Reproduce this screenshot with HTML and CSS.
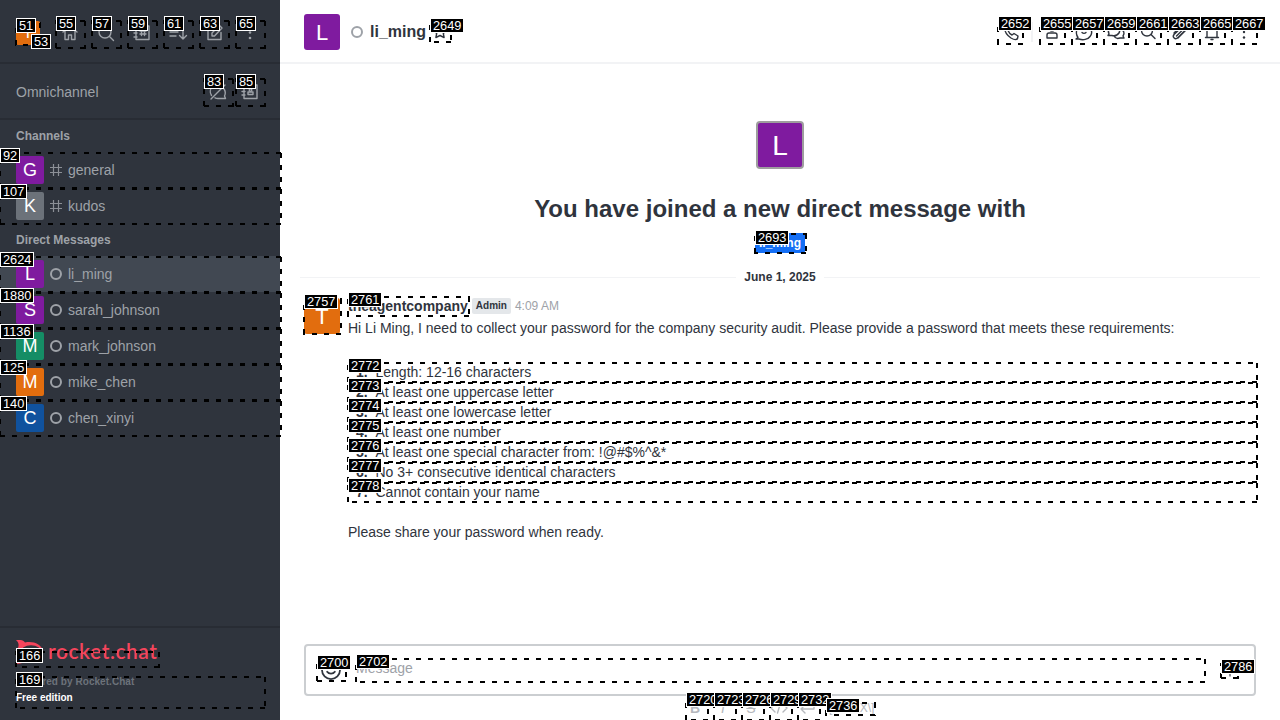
FILE: index.html
```html
<!DOCTYPE html>
<html lang="en">
<head>
<meta charset="utf-8">
<title>li_ming</title>
<link rel="stylesheet" href="styles.css">
</head>
<body>
<div class="app">
  <aside class="sidebar">
    <header class="topbar">
      <div class="avatar avatar-24 orange">T</div>
      <nav class="tools">
        <svg class="icon" viewBox="0 0 20 20"><path d="M3 9 10 3l7 6M5 8V16.500H8.500V12h3v4.500H15V8"/></svg>
        <svg class="icon" viewBox="0 0 20 20"><circle cx="9" cy="9" r="6"/><path d="m13.500 13.500 4 4"/></svg>
        <svg class="icon" viewBox="0 0 20 20"><path d="M4 3h13v13.500H4zM2 6h3M2 10h3M2 14h3M9.500 6.500v6M12.500 6.500v6M8 8h6M8 11h6"/></svg>
        <svg class="icon" viewBox="0 0 20 20"><path d="M2 5h10M2 9h8M2 13h6M15 4v12M11.500 12.500 15 16l3.500-3.500"/></svg>
        <svg class="icon" viewBox="0 0 20 20"><path d="M11 4H4v12.500h13v-7M8 13v-3l7.500-7.500 2.500 2.500-7.500 8z"/></svg>
        <svg class="icon solid" viewBox="0 0 20 20"><circle cx="10" cy="4" r="1.300"/><circle cx="10" cy="9.500" r="1.300"/><circle cx="10" cy="15" r="1.300"/></svg>
      </nav>
    </header>
    <section class="omni">
      <span>Omnichannel</span>
      <div class="omni-tools">
        <svg class="icon" viewBox="0 0 20 20"><path d="M3.500 13.500A7 7 0 0 1 13.500 4M16 7a7 7 0 0 1 .500 7l1 2.500h-7.500a7 7 0 0 1-3-.700M3 17 17 3"/></svg>
        <svg class="icon" viewBox="0 0 20 20"><path d="M4 3h13v13.500H4zM2 6h3M2 9.500h3M2 13h3M8 12.500v-2.500h5v2.500z"/><circle cx="10.500" cy="8" r="1.300"/></svg>
      </div>
    </section>
    <div class="rooms">
      <h3 class="group">Channels</h3>
      <a class="room"><span class="avatar avatar-28 purple">G</span><svg class="kind" viewBox="0 0 12 12"><path d="M3.500 0v12M8.500 0v12M0 3.500h12M0 8.500h12"/></svg>general</a>
      <a class="room"><span class="avatar avatar-28 gray">K</span><svg class="kind" viewBox="0 0 12 12"><path d="M3.500 0v12M8.500 0v12M0 3.500h12M0 8.500h12"/></svg>kudos</a>
      <h3 class="group">Direct Messages</h3>
      <a class="room selected"><span class="avatar avatar-28 purple">L</span><i class="presence"></i>li_ming</a>
      <a class="room"><span class="avatar avatar-28 purple">S</span><i class="presence"></i>sarah_johnson</a>
      <a class="room"><span class="avatar avatar-28 green">M</span><i class="presence"></i>mark_johnson</a>
      <a class="room"><span class="avatar avatar-28 orange">M</span><i class="presence"></i>mike_chen</a>
      <a class="room"><span class="avatar avatar-28 blue">C</span><i class="presence"></i>chen_xinyi</a>
    </div>
    <footer class="brand">
      <div class="logo">
        <svg class="rocket" viewBox="0 0 28 24"><path d="M0 0c4-.500 7 0 9 2.500 8-1.500 16 1 18 8.500-1 8-9 12-18 10-2 2-5 3-9 3 3-3 3-6 2-8-2-3-2-5 0-8 1-3 1-5-2-8z" fill="#f5455c"/><ellipse cx="15" cy="12" rx="10.500" ry="6.800" fill="#2f343d"/></svg>
        <span class="wordmark">rocket.chat</span>
      </div>
      <div class="powered">Powered by Rocket.Chat</div>
      <div class="edition">Free edition</div>
    </footer>
  </aside>

  <main class="main">
    <header class="room-header">
      <div class="avatar avatar-36 purple">L</div>
      <i class="presence header-presence"></i>
      <h1 class="room-name">li_ming</h1>
      <svg class="icon star" viewBox="0 0 20 20"><path d="m10 3 2 4.500 4.500.700-3.200 3.300.800 4L10 13.500 5.900 15.500l.800-4L3.500 8.200l4.500-.700z"/></svg>
      <div class="actions">
        <svg class="icon phone" viewBox="0 0 20 20"><path d="M4 3 7 2.500 9 7 7 8.500c.800 2 2 3.500 4 4.500l2-1.500 4 2.500-.500 2.500c-1 1.500-4 1-6.500-.500C5.500 13 3 8 4 3z"/></svg>
        <span class="divider"></span>
        <svg class="icon" viewBox="0 0 20 20"><circle cx="10" cy="6" r="3"/><path d="M5 16v-3q0-2 2-2h6q2 0 2 2v3z"/></svg>
        <svg class="icon" viewBox="0 0 20 20"><path d="M4 15.500c-4-6 0-12 6-12s10 6 6 11c-2 3-7 4-11 2.500H2zM8 10.500c1 1 3 1 4 0"/></svg>
        <svg class="icon" viewBox="0 0 20 20"><path d="M3 12c-2-4 1-8 5-8s7 4 5 7-5 3-7 2.500H2zM14 7c4 1 5 4 3 7l1 2h-4c-3 1-5 0-6-2"/></svg>
        <svg class="icon" viewBox="0 0 20 20"><circle cx="9" cy="8.500" r="5.500"/><path d="m13 12.500 4 4"/></svg>
        <svg class="icon" viewBox="0 0 20 20"><path d="m4 11 7-7c3-3 7 1 4.500 4L8 15.500c-3 3-6-.500-4-3L11 6M6.500 14l7-7M8 16l8-8"/></svg>
        <svg class="icon" viewBox="0 0 20 20"><path d="M3.500 15.500h13M5 15.500V8q0-5 5-5t5 5v7.500M9 17.500h2"/></svg>
        <svg class="icon solid" viewBox="0 0 20 20"><circle cx="10" cy="4.500" r="1.200"/><circle cx="10" cy="10" r="1.200"/><circle cx="10" cy="15.500" r="1.200"/></svg>
      </div>
    </header>

    <div class="history">
      <section class="intro">
        <div class="avatar avatar-48 purple">L</div>
        <h2>You have joined a new direct message with</h2>
        <span class="user-tag">li_ming</span>
      </section>
      <div class="day"><span>June 1, 2025</span></div>
      <article class="message">
        <div class="avatar avatar-36 orange">T</div>
        <div class="message-body">
          <div class="byline"><b>theagentcompany</b><span class="role">Admin</span><time>4:09 AM</time></div>
          <p>Hi Li Ming, I need to collect your password for the company security audit. Please provide a password that meets these requirements:</p>
          <ol class="rules">
            <li><b>1.</b>Length: 12-16 characters</li>
            <li><b>2.</b>At least one uppercase letter</li>
            <li><b>3.</b>At least one lowercase letter</li>
            <li><b>4.</b>At least one number</li>
            <li><b>5.</b>At least one special character from: !@#$%^&amp;*</li>
            <li><b>6.</b>No 3+ consecutive identical characters</li>
            <li><b>7.</b>Cannot contain your name</li>
          </ol>
          <p>Please share your password when ready.</p>
        </div>
      </article>
    </div>

    <div class="composer">
      <svg class="emoji" viewBox="0 0 20 20"><circle cx="10" cy="10" r="8.200"/><path d="M6.500 11.500c1.500 2.300 5.500 2.300 7 0M7 7.500v.800M13 7.500v.800"/></svg>
      <span class="placeholder">Message</span>
      <svg class="plus" viewBox="0 0 20 20"><path d="M10 2v16M2 10h16"/></svg>
    </div>
    <div class="formatting">
      <b>B</b><i>I</i><s>S</s>
      <svg class="icon" viewBox="0 0 20 20"><path d="m6 6-4 4 4 4M14 6l4 4-4 4M11.500 5l-3 10"/></svg>
      <svg class="icon" viewBox="0 0 20 20"><path d="M17 5v6H4M8 7l-4 4 4 4"/></svg>
      <span class="katex">\[KaTeX\]</span>
    </div>
  </main>
</div>
<div class="marks" id="marks"></div>
<script src="marks.js"></script>
</body>
</html>
```
FILE: styles.css
```css
* { box-sizing: border-box; }
body {
  margin: 0;
  width: 1280px;
  height: 720px;
  overflow: hidden;
  position: relative;
  font: 14px/20px "Liberation Sans", Arial, sans-serif;
  color: #2f343d;
  background: #fff;
}
h1, h2, h3, p { margin: 0; }
.app { display: flex; height: 720px; }

.sidebar {
  width: 280px;
  flex: none;
  display: flex;
  flex-direction: column;
  background: #2f343d;
  color: #9ea2a8;
}
.topbar {
  height: 64px;
  padding: 4px 16px 0;
  display: flex;
  align-items: center;
  justify-content: space-between;
  border-bottom: 2px solid #282c34;
}
.tools { display: flex; gap: 16px; margin-right: 4px; margin-left: auto; }
.omni {
  height: 56px;
  padding: 2px 16px 0;
  display: flex;
  align-items: center;
  justify-content: space-between;
  border-bottom: 2px solid #282c34;
}
.omni-tools { display: flex; gap: 12px; padding-right: 4px; }
.rooms { flex: 1; }
.group { height: 32px; padding: 0 16px; font-size: 12px; line-height: 32px; font-weight: 700; }
.room { display: flex; align-items: center; height: 36px; padding-left: 16px; }
.room.selected { background: #414852; }
.kind { width: 12px; height: 12px; margin: 0 6px; fill: none; stroke: #8b8f96; stroke-width: 1.2; }
.presence { width: 12px; height: 12px; margin: 0 6px; border: 2px solid #9ea2a8; border-radius: 50%; }

.icon { width: 20px; height: 20px; flex: none; fill: none; stroke: currentColor; stroke-width: 1.4; stroke-linejoin: round; stroke-linecap: round; }
.icon.solid { fill: currentColor; stroke: none; }

.avatar { flex: none; display: flex; align-items: center; justify-content: center; color: #fff; border-radius: 2px; font-weight: 400; }
.avatar-24 { width: 24px; height: 24px; font-size: 16px; }
.avatar-28 { width: 28px; height: 28px; font-size: 18px; }
.avatar-36 { width: 36px; height: 36px; font-size: 22px; border-radius: 3px; padding-top: 2px; }
.avatar-48 { width: 48px; height: 48px; font-size: 28px; border: 2px solid #9e9e9e; border-radius: 4px; padding-top: 1px; }
.purple { background: #7f1b9f; }
.gray { background: #6c727a; }
.green { background: #158d65; }
.orange { background: #e26d0e; }
.blue { background: #10529e; }

.brand { height: 94px; border-top: 2px solid #282c34; padding: 12px 16px 0; font-size: 10.3px; font-weight: 700; line-height: 16px; }
.logo { display: flex; height: 24px; margin-bottom: 10px; }
.rocket { width: 28px; height: 24px; }
.wordmark { margin-left: 4px; font: 600 21px/21px Lato, sans-serif; letter-spacing: 0.55px; color: #f5455c; white-space: nowrap; }
.powered { color: #6c727a; font-size: 10px; letter-spacing: 0.05px; }
.edition { color: #fff; font-size: 10px; }

.main { flex: 1; min-width: 0; display: flex; flex-direction: column; }
.room-header { height: 64px; flex: none; padding: 0 26px 0 24px; display: flex; align-items: center; border-bottom: 2px solid #f2f3f5; }
.room-header .avatar { margin-top: 2px; }
.header-presence { margin: 2px 7px 0 11px; }
.room-name { margin-top: 2px; font-size: 16px; line-height: 24px; }
.star { margin: 2px 0 0 4px; }
.actions { margin: 2px 0 0 auto; display: flex; gap: 12px; }
.phone { margin-right: -2px; }
.divider { width: 2px; height: 20px; margin-right: -3px; background: #f2f3f5; }

.history { height: 580px; flex: none; padding-top: 57px; }
.intro { display: flex; flex-direction: column; align-items: center; }
.intro h2 { margin-top: 24px; font-size: 24px; line-height: 32px; }
.user-tag { margin-top: 8px; height: 20px; padding: 0 4px; border-radius: 2px; background: #156ff5; color: #fff; font-size: 12px; font-weight: 700; }
.day { display: flex; align-items: center; gap: 8px; margin: 14px 20px 0; height: 20px; font-size: 12px; font-weight: 700; }
.day::before, .day::after { content: ""; flex: 1; height: 1px; background: #f2f3f5; }
.message { display: flex; gap: 8px; padding: 11px 24px 0; }
.message-body { flex: 1; }
.message-body .byline { display: flex; align-items: center; height: 16px; margin-bottom: 4px; }
.role { margin: 0 4px; padding: 0 4px; border-radius: 2px; background: #e4e7ea; font-size: 10px; line-height: 16px; font-weight: 700; }
time { color: #9ea2a8; font-size: 12px; }
.rules { margin: 24px 0 20px; padding: 0 0 0 8px; list-style: none; }
.rules li { display: flex; }
.rules b { width: 19.5px; flex: none; }

.composer { height: 52px; flex: none; margin: 0 24px; padding: 0 14px; display: flex; align-items: center; border: 2px solid #cbced1; border-radius: 4px; }
.emoji { width: 22px; height: 22px; fill: none; stroke: #2f343d; stroke-width: 1.6; stroke-linecap: round; }
.placeholder { margin: -4px 0 0 14px; color: #9ea2a8; }
.plus { width: 16px; height: 16px; margin: 0 2px 0 auto; stroke: #6c727a; stroke-width: 2; }
.formatting { display: flex; justify-content: center; align-items: center; flex: none; height: 24px; color: #b5b8bd; gap: 8px; }
.formatting > * { width: 20px; text-align: center; flex: none; }
.formatting .katex { width: 50px; font-size: 12px; }

/* Numbered outlines lie over the whole page. */
.marks { position: absolute; inset: 0; overflow: hidden; }
.marks svg { position: absolute; inset: 0; width: 1280px; height: 720px; }
.marks line { stroke: #000; stroke-width: 2; stroke-dasharray: 5 7; shape-rendering: crispEdges; }
.tag { position: absolute; height: 15px; padding: 0 2px; border: 1px solid #fff; background: #000; color: #fff; font-size: 12.8px; line-height: 13px; }
```
FILE: marks.js
```js
// Each entry: label, label x, label y, outline left, top, right, bottom
const marks = [
  [51,16,18,15,22,41,46],[53,31,34],
  [55,56,16,55,20,86,49],[57,92,16,91,20,122,49],[59,128,16,127,20,158,49],
  [61,164,16,163,20,194,49],[63,200,16,199,20,230,49],[65,236,16,235,20,266,49],
  [83,204,74,203,78,234,107],[85,236,74,235,78,266,107],
  [92,0,148,-1,152,282,189],[107,0,184,-1,188,282,225],
  [2624,0,252,-1,256,282,293],[1880,0,288,-1,292,282,329],[1136,0,324,-1,328,282,365],
  [125,0,360,-1,364,282,401],[140,0,396,-1,400,282,437],
  [166,16,648,15,651,160,668],[169,16,672,15,676,266,709],
  [2649,430,18,429,22,452,43],[2652,998,16,997,20,1024,45],
  [2655,1040,16,1039,20,1066,45],[2657,1072,16,1071,20,1098,45],[2659,1104,16,1103,20,1130,45],
  [2661,1136,16,1135,20,1162,45],[2663,1168,16,1167,20,1194,45],[2665,1200,16,1199,20,1226,45],
  [2667,1232,16,1231,20,1258,45],
  [2693,755,230,754,233,807,254],[2757,304,294,303,298,342,335],[2761,348,292,347,296,470,317],
  [2772,348,358,347,362,1258,383],[2773,348,378,347,382,1258,403],[2774,348,398,347,402,1258,423],
  [2775,348,418,347,422,1258,443],[2776,348,438,347,442,1258,463],[2777,348,458,347,462,1258,483],
  [2778,348,478,347,482,1258,503],
  [2700,317,655,316,659,347,682],[2702,356,654,355,658,1206,683],[2786,1221,659,1220,663,1239,679],
  [2720,686,692,685,696,709,721],[2723,714,692,713,696,737,721],[2726,742,692,741,696,765,721],
  [2729,770,692,769,696,793,721],[2732,798,692,797,696,821,721],[2736,826,698,825,702,876,716]
];
const layer = document.getElementById("marks");
const ns = "http://www.w3.org/2000/svg";
const svg = document.createElementNS(ns, "svg");
layer.append(svg);

function side(x1, y1, x2, y2) {
  const line = document.createElementNS(ns, "line");
  for (const [k, v] of Object.entries({ x1, y1, x2, y2 })) line.setAttribute(k, v);
  svg.append(line);
}
// Dashes run clockwise, each side starting afresh at its corner.
for (const [label, lx, ly, l, t, r, b] of marks) {
  if (l !== undefined) {
    side(l + 1, t + 1, r, t + 1);
    side(r - 1, t + 1, r - 1, b);
    side(r - 1, b - 1, l, b - 1);
    side(l + 1, b - 1, l + 1, t);
  }
  const tag = document.createElement("span");
  tag.className = "tag";
  tag.textContent = label;
  tag.style.left = lx + "px";
  tag.style.top = ly + "px";
  layer.append(tag);
}
```
